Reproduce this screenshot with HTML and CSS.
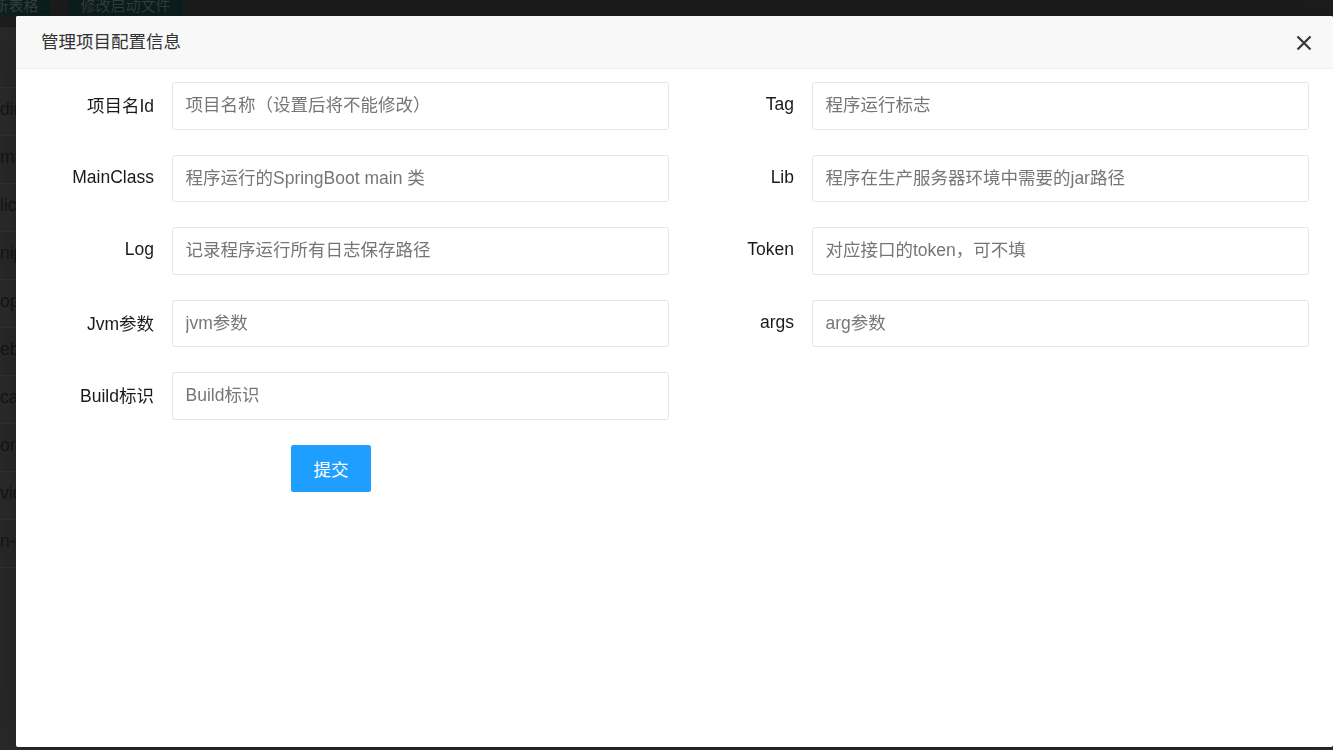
FILE: index.html
```html
<!DOCTYPE html>
<html lang="zh-CN">
<head>
<meta charset="utf-8">
<title>管理项目配置信息</title>
<link rel="stylesheet" href="styles.css">
</head>
<body>
<div class="bg-page">
  <div class="toolbar">
    <span class="tb-btn tb-btn-first">新表格</span>
    <span class="tb-btn">修改启动文件</span>
  </div>
  <div class="table-head"></div>
  <div class="row"><span class="cell">dint</span></div>
  <div class="row"><span class="cell">main</span></div>
  <div class="row"><span class="cell">lice</span></div>
  <div class="row"><span class="cell">nipp</span></div>
  <div class="row"><span class="cell">opla</span></div>
  <div class="row"><span class="cell">ebxx</span></div>
  <div class="row"><span class="cell">cata</span></div>
  <div class="row"><span class="cell">onte</span></div>
  <div class="row"><span class="cell">vice</span></div>
  <div class="row"><span class="cell">n-co</span></div>
</div>
<div class="shade"></div>

<div class="layer">
  <div class="layer-title">
    <span>管理项目配置信息</span>
    <span class="layer-close" aria-label="关闭">
      <svg width="20" height="20" viewBox="0 0 20 20"><path d="M3.5 3.5 L16.5 16.5 M16.5 3.5 L3.5 16.5" stroke="#3a3a3a" stroke-width="2.3" stroke-linecap="butt" fill="none"/></svg>
    </span>
  </div>
  <form class="form">
    <label class="label">项目名Id</label>
    <input class="input" placeholder="项目名称（设置后将不能修改）">
    <label class="label">Tag</label>
    <input class="input" placeholder="程序运行标志">

    <label class="label">MainClass</label>
    <input class="input" placeholder="程序运行的SpringBoot main 类">
    <label class="label">Lib</label>
    <input class="input" placeholder="程序在生产服务器环境中需要的jar路径">

    <label class="label">Log</label>
    <input class="input" placeholder="记录程序运行所有日志保存路径">
    <label class="label">Token</label>
    <input class="input" placeholder="对应接口的token，可不填">

    <label class="label">Jvm参数</label>
    <input class="input" placeholder="jvm参数">
    <label class="label">args</label>
    <input class="input" placeholder="arg参数">

    <label class="label">Build标识</label>
    <input class="input" placeholder="Build标识">
    <span></span><span></span>

    <span></span>
    <button type="button" class="submit">提交</button>
  </form>
</div>
</body>
</html>
```
FILE: styles.css
```css
html, body {
  margin: 0;
  padding: 0;
  width: 1333px;
  height: 750px;
  overflow: hidden;
  background: #2b2b2b;
  font-family: "Liberation Sans", "Noto Sans CJK SC", sans-serif;
}

.bg-page {
  margin-top: -12px;
  width: 1333px;
}

.toolbar {
  height: 39px;
  background: #1e1e1e;
  display: flex;
  align-items: flex-start;
  gap: 17px;
  padding-left: 0;
}

.tb-btn {
  display: block;
  height: 20px;
  padding: 7px 12.5px 0;
  line-height: 20px;
  font-size: 15px;
  color: #3b3f3e;
  background: #0a221f;
  white-space: nowrap;
  font-family: "Noto Sans CJK SC", sans-serif;
}

.tb-btn-first {
  margin-left: -19px;
}

.table-head {
  height: 60px;
  background: #2b2b2b;
  border-bottom: 1px solid #343434;
}

.row {
  height: 47px;
  border-bottom: 1px solid #343434;
  background: #2b2b2b;
  display: flex;
  align-items: center;
}

.row:nth-child(odd) {
  background: #2d2d2d;
}

.cell {
  width: 40px;
  font-size: 17.5px;
  color: #161616;
  white-space: nowrap;
  overflow: hidden;
  margin-top: -5px;
}

.shade {
  position: fixed;
  inset: 0;
  background: rgba(0, 0, 0, 0.02);
}

.layer {
  position: fixed;
  left: 16px;
  top: 16px;
  width: 1317px;
  height: 731px;
  background: #fff;
  box-shadow: 1px 1px 50px rgba(0, 0, 0, 0.3);
  border-radius: 2px;
}

.layer-title {
  height: 52px;
  line-height: 52px;
  padding-left: 25px;
  background: #f8f8f8;
  border-bottom: 1px solid #eee;
  border-radius: 2px 2px 0 0;
  font-size: 17.5px;
  color: #333;
  font-family: "Noto Sans CJK SC", sans-serif;
  display: flex;
  align-items: center;
  justify-content: space-between;
}

.layer-title span:first-child {
  margin-top: -2px;
}

.layer-close {
  width: 20px;
  height: 20px;
  margin-right: 19px;
  margin-top: 1px;
  display: flex;
}

.form {
  margin: 0;
  padding-top: 13px;
  display: grid;
  grid-template-columns: 156px 497px 143px 497px;
  grid-auto-rows: 47.5px;
  row-gap: 25px;
}

.label {
  display: flex;
  align-items: center;
  justify-content: flex-end;
  padding-right: 18px;
  font-size: 17.5px;
  color: #1a1a1a;
  margin-top: -2px;
}

.input {
  box-sizing: border-box;
  height: 47.5px;
  width: 497px;
  border: 1.25px solid #e6e6e6;
  border-radius: 2.5px;
  padding: 0 0 0 12.5px;
  margin: 0;
  font-size: 17.5px;
  font-family: "Liberation Sans", "Noto Sans CJK SC", sans-serif;
  color: #333;
  background: #fff;
  outline: none;
}

.input::placeholder {
  color: #767676;
}

.submit {
  justify-self: start;
  margin-left: 119px;
  width: 80px;
  height: 47.5px;
  border: none;
  border-radius: 2.5px;
  background: #1e9fff;
  color: #fff;
  font-size: 17.5px;
  font-family: "Noto Sans CJK SC", sans-serif;
  padding: 0;
  cursor: pointer;
}
```
